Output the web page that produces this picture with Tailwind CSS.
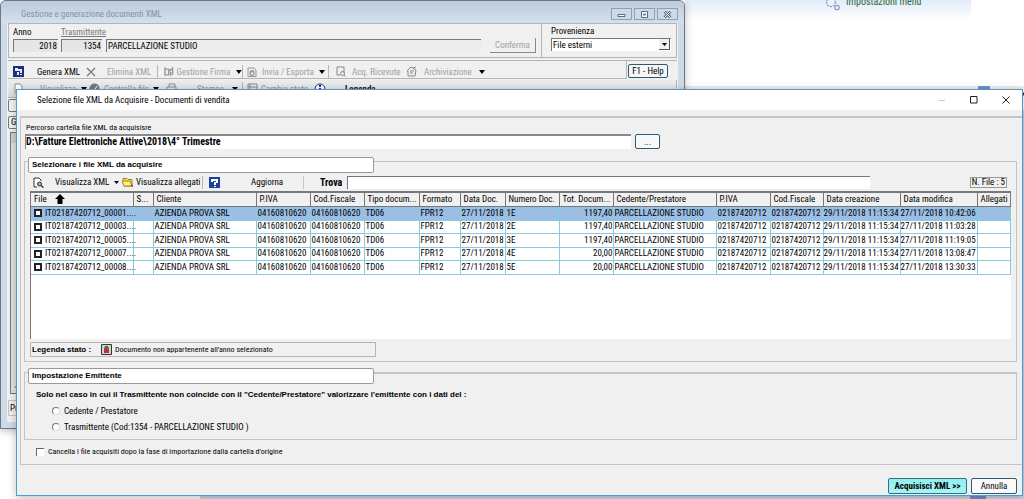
<!DOCTYPE html>
<html lang="it">
<head>
<meta charset="utf-8">
<title>Selezione file XML da Acquisire - Documenti di vendita</title>
<script src="https://cdn.jsdelivr.net/npm/@tailwindcss/browser@4"></script>
</head>
<body class="relative h-screen overflow-hidden bg-white font-['Roboto_Condensed','Liberation_Sans',sans-serif] text-[9px] leading-[12px] text-black">

<!-- Desktop behind the windows -->
<div class="ml-[685px] mr-[53px] flex h-5 bg-linear-to-b from-[#e3ecf9] to-white">
  <div class="absolute left-[824px] top-0 h-3 w-6">
    <svg viewBox="0 0 24 12" class="h-3 w-6" fill="#eef3fb" stroke="#8fa3c4"><circle cx="7" cy="2" r="4.500" stroke-width="1.500" stroke-dasharray="2 1"/><circle cx="13" cy="7.500" r="2.200" stroke-width="1.300"/></svg>
  </div>
  <a href="#" class="absolute left-[846px] top-[-4px] text-[10px] leading-[12px] text-[#1d6a3a]">Impostazioni menu</a>
</div>
<div class="absolute left-[685px] right-0 top-[86px] h-[3px] bg-[#f4ebe4]"></div>
<div class="absolute right-[34px] top-[86px] h-[3px] w-3 bg-[#6f8fc4]"></div>
<div class="absolute bottom-0 right-0 top-[110px] w-6 bg-[#c9d5e6]"></div>
<div class="absolute bottom-0 left-[200px] right-0 h-6 bg-[#c9d5e6]"></div>
<div class="absolute bottom-0 right-[38px] h-1 w-4 bg-[#6f8fc4]"></div>
<div class="absolute right-0 top-[92px] h-1 w-1 rounded-full bg-black"></div>

<!-- Main window -->
<section class="absolute left-0 top-0 flex h-[429px] w-[685px] flex-col whitespace-nowrap rounded-t-md border border-[#6f7682] bg-[#cddae8] px-[6px] pb-[6px] shadow-[0_2px_8px_rgba(0,0,0,0.25)]">
  <header class="-mx-[6px] flex h-[22px] shrink-0 items-center justify-between rounded-t-md bg-linear-to-b from-[#bccbdc] to-[#d3e0ee] pl-5 pr-[6px]">
    <h1 class="pt-1 text-[9px] text-[#8a939e]">Gestione e generazione documenti XML</h1>
    <div class="flex gap-[2px] pt-1">
      <button aria-label="Riduci" class="flex h-3 w-[21px] items-center justify-center border border-[#8fa0b5] bg-[#ccd9e8]"><svg viewBox="0 0 9 7" class="h-[7px] w-[9px]" fill="#fff" stroke="#5d6b7c"><path d="M1 3.500h7v2H1z"/></svg></button>
      <button aria-label="Ingrandisci" class="flex h-3 w-[21px] items-center justify-center border border-[#8fa0b5] bg-[#ccd9e8]"><svg viewBox="0 0 9 7" class="h-[7px] w-[9px]" fill="#fff" stroke="#5d6b7c"><path d="M1.500.5h6v6h-6zM3.500 3h2v1h-2z"/></svg></button>
      <button aria-label="Chiudi" class="flex h-3 w-[21px] items-center justify-center border border-[#8fa0b5] bg-[#ccd9e8]"><svg viewBox="0 0 9 7" class="h-[7px] w-[9px]" fill="none"><path d="M1.500.5l6 6M7.500.5l-6 6" stroke="#5d6b7c" stroke-width="2.600"/><path d="M1.500.5l6 6M7.500.5l-6 6" stroke="#fff"/></svg></button>
    </div>
  </header>

  <div class="flex min-h-0 grow flex-col bg-[#f0f0f0] px-px">
    <div class="flex h-[35px] shrink-0 border border-[#b5b5b5]">
      <div class="flex w-[533px] items-start border-r border-[#b5b5b5] pl-1">
        <label class="w-12 pt-[2px]">Anno
          <input readonly value="2018" class="mt-px block h-[13px] w-[45px] border-l border-t border-[#777] bg-[#e6e6e6] pr-px text-right"></label>
        <label class="w-[45px] pt-[2px] text-[#7a7a7a]"><span class="underline">Trasmittente</span>
          <input readonly value="1354" class="mt-px block h-[13px] w-[41px] border-l border-t border-[#777] bg-[#e6e6e6] pr-px text-right text-black"></label>
        <input readonly aria-label="Ragione sociale" value="PARCELLAZIONE STUDIO" class="mt-[15px] h-[13px] w-[375px] border-l border-t border-[#777] bg-[#ececec] pl-px">
        <button disabled class="ml-[9px] mt-[14px] h-[15px] w-[46px] border-b border-r border-[#888] bg-[#f0f0f0] text-[#a0a0a0]">Conferma</button>
      </div>
      <div class="pl-[9px] pt-px">
        <label for="prov" class="block">Provenienza</label>
        <div class="relative mt-px">
          <select id="prov" class="block h-[13px] w-[120px] appearance-none border-l border-t border-[#777] bg-white pl-px leading-[12px]"><option>File esterni</option></select>
          <span class="pointer-events-none absolute right-px top-px flex h-[11px] w-[11px] items-center justify-center border-b border-r border-[#555] bg-[#f0f0f0]"><svg viewBox="0 0 5 3" class="h-[3px] w-[5px]"><path d="M0 0h5L2.500 3z"/></svg></span>
        </div>
      </div>
    </div>

    <div class="mt-[2px] flex h-[19px] shrink-0 border-t border-[#b5b5b5] text-[#a0a0a0]">
      <div class="flex w-[619px] items-center border-b border-r border-[#b5b5b5] pl-[5px] pt-1">
        <button class="flex w-[73px] items-center gap-[13px] text-black"><svg viewBox="0 0 11 11" class="h-[11px] w-[11px]"><path fill="#1c2f7c" d="M0 0h11v11H0z"/><path fill="#e4ebff" d="M2 2h3v3H2zM5 3h4v4H7V5H5zM4 6h2v3H4zM7 8h2v1H7z"/></svg>Genera XML</button>
        <button disabled class="flex w-[71px] items-center gap-[11px]"><svg viewBox="0 0 10 10" class="h-[10px] w-[10px]" fill="none" stroke="#777" stroke-width="1.200"><path d="M1 1l8 8M9 1L1 9"/></svg>Elimina XML</button>
        <button disabled class="flex h-[13px] w-[85px] items-center gap-[2px] border-l border-[#b5b5b5] pl-[6px]"><svg viewBox="0 0 11 11" class="h-[11px] w-[11px]" fill="none" stroke="#999" stroke-width="1.500"><path d="M1 1v9M1 3h4v6H1M6 5l3-3v7M7 10V6"/></svg>Gestione Firma<svg viewBox="0 0 6 4" class="ml-1 h-1 w-[6px]" fill="#000"><path d="M0 0h6L3 4z"/></svg></button>
        <button disabled class="flex h-[13px] w-[86px] items-center gap-[5px] border-l border-[#b5b5b5] pl-1"><svg viewBox="0 0 10 10" class="h-[10px] w-[10px]" fill="none" stroke="#999"><path d="M1 1h6l2 2v6.500H1z"/><path d="M3 6c0-3 4-3 4 0s-4 3-4 0l3-2" stroke-width="1.300"/></svg>Invia / Esporta<svg viewBox="0 0 6 4" class="h-1 w-[6px]"><path d="M0 0h6L3 4z"/></svg></button>
        <button disabled class="flex h-[13px] w-[78px] items-center gap-[6px] border-l border-[#b5b5b5] pl-[7px]"><svg viewBox="0 0 10 11" class="h-[11px] w-[10px]" fill="none" stroke="#888"><path d="M4 9H1V1h7v6"/><circle cx="6.500" cy="7.500" r="2"/><path d="M8 9l1.500 1.500"/></svg>Acq. Ricevute</button>
        <button disabled class="flex items-center gap-[7px]"><svg viewBox="0 0 11 11" class="h-[11px] w-[11px]" fill="none" stroke="#888"><path d="M1 5l4-4 5 3-1 6H2V5zM4 5h4M4 7h3M7 2l3-1"/></svg>Archiviazione<svg viewBox="0 0 6 4" class="h-1 w-[6px]"><path d="M0 0h6L3 4z"/></svg></button>
      </div>
      <button class="ml-px mt-[3px] h-[14px] w-[40px] rounded-xs border border-[#2f5872] bg-[#f6f6f6] text-black">F1 - Help</button>
    </div>

    <div class="mt-px flex h-[18px] shrink-0 items-center border-b border-r border-[#b5b5b5] bg-linear-to-b from-[#ececec] to-[#dcdcdc] pl-[6px] text-[#909090]">
      <button disabled class="flex w-[75px] items-center gap-[17px]"><svg viewBox="0 0 9 11" class="h-[11px] w-[9px]" fill="#fff" stroke="#888"><path d="M1 1h5l2 2v7H1z"/></svg>Visualizza<svg viewBox="0 0 6 4" class="-ml-3 h-1 w-[6px]" fill="#000"><path d="M0 0h6L3 4z"/></svg></button>
      <button disabled class="flex w-[77px] items-center gap-1"><svg viewBox="0 0 11 11" class="h-[11px] w-[11px]"><circle cx="5.500" cy="5.500" r="5" fill="#777"/><path d="M3 6l2 2 3-5" stroke="#fff" fill="none"/></svg>Controlla file<svg viewBox="0 0 6 4" class="h-1 w-[6px]"><path d="M0 0h6L3 4z"/></svg></button>
      <button disabled class="flex w-[76px] items-center gap-5"><svg viewBox="0 0 11 11" class="h-[11px] w-[11px]" fill="none" stroke="#888"><path d="M3 4V1h6v3M1 4h9v4H1zM3 8v2h5V8"/></svg>Stampa<svg viewBox="0 0 6 4" class="-ml-3 h-1 w-[6px]"><path d="M0 0h6L3 4z"/></svg></button>
      <button disabled class="flex h-[13px] w-[72px] items-center gap-[3px] border-l border-[#b5b5b5] pl-1"><svg viewBox="0 0 11 11" class="h-[11px] w-[11px]" fill="none" stroke="#888"><path d="M1 1h9v9H1zM1 4h9M3 1v9"/></svg>Cambia stato</button>
      <svg viewBox="0 0 12 12" class="h-3 w-3"><circle cx="6" cy="6" r="5" fill="#fff" stroke="#1c2f7c"/><path d="M6 2v2M6 5v4" stroke="#1026c0" stroke-width="2"/></svg>
      <span class="ml-[19px] font-bold text-[#222]">Legenda</span>
    </div>

    <div class="mt-px h-[13px] w-10 shrink-0 rounded-xs border border-[#777] bg-[#f4f4f4]"></div>
    <button class="mt-1 h-[13px] w-10 shrink-0 rounded-xs border border-[#777] bg-[#f4f4f4] pl-[2px] text-left leading-[11px]">G</button>
    <div class="ml-[2px] mt-[3px] flex grow flex-col justify-between border border-[#777] bg-[#e2e2e2]">
      <div class="h-[10px] bg-[#cfcfcf]"></div>
      <svg viewBox="0 0 5 6" class="mb-[3px] ml-1 h-[6px] w-[5px]"><path d="M4 0v6L0 3z"/></svg>
    </div>
    <div class="mt-[6px] h-4 shrink-0 border border-[#c4c4c4] pl-px pt-px">Pr</div>
    <div class="h-[6px] shrink-0"></div>
  </div>
</section>

<!-- Import dialog -->
<main class="absolute left-4 right-px top-[89px] border border-[#4f9bd0] bg-[#f0f0f0] pb-px shadow-[0_2px_8px_rgba(0,0,0,0.25)]">
  <header class="flex h-5 items-center justify-between bg-white pl-5 pr-3">
    <h2>Selezione file XML da Acquisire - Documenti di vendita</h2>
    <div class="flex items-center gap-6">
      <button aria-label="Riduci" disabled class="flex h-3 w-2 items-center"><svg viewBox="0 0 8 8" class="h-2 w-2" stroke="#ccc"><path d="M0 4.500h7"/></svg></button>
      <button aria-label="Ingrandisci" class="flex h-3 w-2 items-center"><svg viewBox="0 0 8 8" class="h-2 w-2" fill="none" stroke="#222"><path d="M.5.5h6.500v6.500H.5z"/></svg></button>
      <button aria-label="Chiudi" class="flex h-3 w-2 items-center"><svg viewBox="0 0 8 8" class="h-2 w-2" stroke="#222"><path d="M.5.5l7 7M7.500.5l-7 7"/></svg></button>
    </div>
  </header>

  <div class="ml-[3px] mt-[6px] border-b border-l border-t-2 border-[#c4c4c4] pl-[3px] pr-[5px] pt-1">
    <label for="path" class="block pl-[2px] text-[8px]">Percorso cartella file XML da acquisisre</label>
    <div class="flex gap-1 pl-px">
      <input id="path" value="D:\Fatture Elettroniche Attive\2018\4° Trimestre" class="h-[15px] w-[606px] border-l border-t-2 border-[#8a8a8a] bg-white pb-[2px] text-[10px] font-bold">
      <button class="h-[15px] w-[25px] rounded-xs border border-[#2f5872] bg-[#f8f8f8] leading-[10px]">...</button>
    </div>

    <!-- File list -->
    <fieldset class="mt-2 pb-1">
      <div class="flex items-start">
        <div class="mt-1 h-3 w-1 border-l border-t border-[#c4c4c4]"></div>
        <h3 class="h-4 w-[346px] rounded-xs border border-[#9a9a9a] bg-white pl-[3px] font-['Liberation_Sans',sans-serif] text-[8px] leading-[14px] font-bold">Selezionare i file XML da acquisire</h3>
        <div class="mt-1 h-3 grow border-r border-t border-[#c4c4c4]"></div>
      </div>
      <div class="border-x border-b border-[#c4c4c4] pb-1 pl-[5px] pr-[5px]">
        <div class="flex h-[18px] items-center pl-[3px] whitespace-nowrap">
          <button class="flex w-[89px] items-center gap-[11px]"><svg viewBox="0 0 11 11" class="h-[11px] w-[11px]" fill="none" stroke="#333"><path d="M4 10H1V1h5l2 2v1" fill="#fff"/><circle cx="6.500" cy="7" r="2" fill="#7fb8b0"/><path d="M8 8.500l2.500 2" stroke-width="1.500"/></svg>Visualizza XML<svg viewBox="0 0 5 3" class="-ml-[6px] h-[3px] w-[5px]"><path d="M0 0h5L2.500 3z"/></svg></button>
          <button class="flex h-[13px] w-[81px] items-center gap-[2px] border-r border-[#b5b5b5]"><svg viewBox="0 0 12 10" class="h-[10px] w-3 shrink-0"><path d="M1 1.500h4l1 1h4v6.500H2z" fill="#f6e25a" stroke="#a08a10"/><path d="M0 4h8l2 5H2z" fill="#fff08a" stroke="#a08a10"/><path d="M9 8l2 1.500" stroke="#222"/></svg>Visualizza allegati</button>
          <button class="flex h-[13px] w-[101px] items-center gap-[31px] border-r border-[#c4c4c4] pl-[6px]"><svg viewBox="0 0 11 11" class="h-[11px] w-[11px]"><path fill="#1c3fa0" d="M0 0h11v11H0z"/><path fill="#fff" d="M2 2h3v2H4v1H2zM5 2h4v4H7v2H5V5h2V4H5zM5 9h2v1H5z"/></svg>Aggiorna</button>
          <label for="find" class="w-[43px] pl-4 pt-px text-[10px] font-bold">Trova</label>
          <input id="find" class="h-[13px] w-[523px] border-l border-t border-[#777] bg-white">
          <span class="ml-auto mr-1 h-[11px] border border-[#999] px-px leading-[9px]">N. File : 5</span>
        </div>
        <div class="h-[148px] border-l border-t-2 border-[#777] bg-white">
          <table class="w-full table-fixed border-collapse whitespace-nowrap">
            <colgroup><col class="w-[102px]"><col class="w-5"><col class="w-[103px]"><col class="w-[54px]"><col class="w-[54px]"><col class="w-[55px]"><col class="w-[41px]"><col class="w-[45px]"><col class="w-[54px]"><col class="w-[54px]"><col class="w-[103px]"><col class="w-[54px]"><col class="w-[53px]"><col class="w-[77px]"><col class="w-[77px]"><col></colgroup>
            <thead><tr id="head" class="h-[13px] bg-[#f0f0f0]"></tr></thead>
            <tbody id="rows"></tbody>
          </table>
        </div>
        <div class="mt-[3px] flex h-[15px] w-[346px] items-center border border-[#b5b5b5] pl-px">
          <b class="w-[69px] font-['Liberation_Sans',sans-serif] text-[8px]">Legenda stato :</b>
          <svg viewBox="0 0 11 11" class="mr-[3px] h-[11px] w-[11px]"><path d="M.5.5h10v10H.5z" fill="#cfd6cf" stroke="#333"/><path d="M3 5h5v4H3z" fill="#d8203a"/><path d="M3 5l1-3h3l1 3z" fill="#2f7a4a"/></svg>
          <span class="text-[8px]">Documento non appartenente all'anno selezionato</span>
        </div>
      </div>
    </fieldset>

    <!-- Issuer -->
    <fieldset class="mt-[2px]">
      <div class="flex items-start">
        <div class="mt-1 h-3 w-1 border-l border-t border-[#c4c4c4]"></div>
        <h3 class="h-4 w-[346px] rounded-xs border border-[#9a9a9a] bg-white pl-[3px] font-['Liberation_Sans',sans-serif] text-[8px] leading-[14px] font-bold">Impostazione Emittente</h3>
        <div class="mt-1 h-3 grow border-r border-t-2 border-[#c4c4c4]"></div>
      </div>
      <div class="h-14 border-x border-b border-[#c4c4c4] pl-[11px] pt-[5px]">
        <p class="font-['Liberation_Sans',sans-serif] text-[8px] font-bold">Solo nel caso in cui il Trasmittente non coincide con il "Cedente/Prestatore" valorizzare l'emittente con i dati del :</p>
        <label class="mt-1 flex items-center gap-1 pl-4"><input type="radio" name="em" class="h-2 w-2 shrink-0 appearance-none rounded-full border border-[#ddd] border-l-[#777] border-t-[#777] bg-white">Cedente / Prestatore</label>
        <label class="mt-1 flex items-center gap-1 pl-4"><input type="radio" name="em" class="h-2 w-2 shrink-0 appearance-none rounded-full border border-[#ddd] border-l-[#777] border-t-[#777] bg-white">Trasmittente (Cod:1354 - PARCELLAZIONE STUDIO )</label>
      </div>
    </fieldset>
    <label class="my-[6px] flex items-center gap-1 pl-3 text-[8px]"><input type="checkbox" class="h-2 w-2 shrink-0 appearance-none border-l border-t border-[#666] bg-white">Cancella i file acquisiti dopo la fase di importazione dalla cartella d'origine</label>
  </div>
  <footer class="flex justify-end gap-1 pr-[5px] pt-[13px]">
    <button class="h-4 w-[79px] rounded-xs border border-[#2f6f82] bg-linear-to-b from-[#8ff0f0] to-[#a8f4f2] leading-[13px] font-bold">Acquisisci XML &gt;&gt;</button>
    <button class="h-4 w-[46px] rounded-xs border border-[#2f5872] bg-[#fafafa] leading-[13px]">Annulla</button>
  </footer>
</main>

<script>
const heads = ['File','S...','Cliente','P.IVA','Cod.Fiscale','Tipo docum...','Formato','Data Doc.','Numero Doc.','Tot. Docum...','Cedente/Prestatore','P.IVA','Cod.Fiscale','Data creazione','Data modifica','Allegati'];
const arrow = '<svg viewBox="0 0 10 10" class="ml-2 inline-block h-[10px] w-[10px] align-[-2px]"><path d="M5 0l5 5H7.500v5h-5V5H0z"/></svg>';
document.getElementById('head').innerHTML = heads.map((h, i) => `<th class="border-r border-b border-[#777] p-0 pl-[3px] text-left font-normal leading-[11px]">${h}${i ? '' : arrow}</th>`).join('');
const data = [['00001','1','1197,40','10:42:06'],['00003','2','1197,40','11:03:28'],['00005','3','1197,40','11:19:05'],['00007','4','20,00','13:08:47'],['00008','5','20,00','13:30:33']];
document.getElementById('rows').innerHTML = data.map((d, i) => {
  const cells = ['', '', 'AZIENDA PROVA SRL','04160810620','04160810620','TD06','FPR12','27/11/2018',d[1]+'E',d[2],'PARCELLAZIONE STUDIO','02187420712','02187420712','29/11/2018 11:15:34','27/11/2018 '+d[3],''];
  return `<tr class="${i % 2 ? 'h-[13px]' : 'h-[14px]'} ${i ? '' : 'bg-[#9bbfe4]'}">` + cells.map((c, j) => {
    const cls = 'border-r border-b border-[#86cbe0] p-0 leading-[11px] ';
    if (!j) return `<td class="${cls}pl-[3px]"><label class="flex items-center gap-[3px]"><input type="checkbox" class="h-2 w-2 shrink-0 appearance-none border-2 border-[#222] bg-white">IT02187420712_${d[0]}....</label></td>`;
    return `<td class="${cls}${j == 9 ? 'text-right' : j > 12 ? '' : 'pl-px'}">${c}</td>`;
  }).join('') + '</tr>';
}).join('');
</script>
</body>
</html>
